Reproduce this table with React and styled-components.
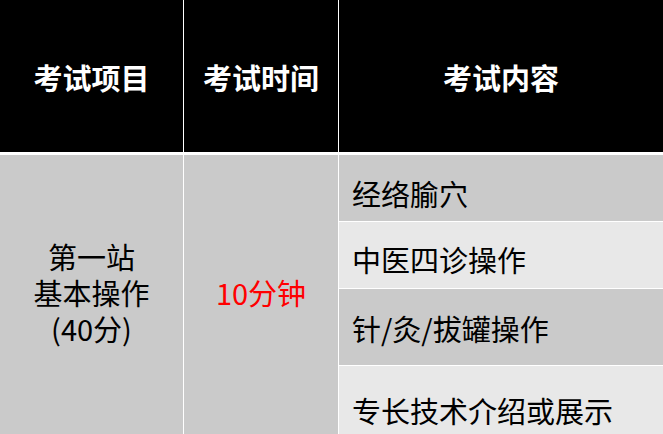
import React from "react";
import styled, { createGlobalStyle } from "styled-components";

const Global = createGlobalStyle`
  html, body { margin: 0; padding: 0; overflow: hidden; background: #ffffff; }
  body { font-family: "Noto Sans CJK SC", "Noto Sans", sans-serif; }
`;

const Table = styled.div`
  width: 663px;
  height: 434px;
  overflow: hidden;
  background: #ffffff;
  display: flex;
  flex-direction: column;
  gap: 3px;
`;

const Row = styled.div`
  display: grid;
  grid-template-columns: 183px 154px 1fr;
  column-gap: 1px;
  height: ${(p) => p.$h}px;
  flex: none;
`;

const HeadCell = styled.div`
  background: #000000;
  color: #ffffff;
  font-weight: 700;
  font-size: 29px;
  display: flex;
  align-items: center;
  justify-content: center;
  padding-top: 2px;
`;

const SpanCell = styled.div`
  background: #cacaca;
  color: ${(p) => p.$color || "#000000"};
  font-size: 29px;
  line-height: 36px;
  display: flex;
  align-items: center;
  justify-content: center;
  text-align: center;
  padding-bottom: 6px;
`;

const ItemList = styled.div`
  display: flex;
  flex-direction: column;
  gap: 1px;
`;

const Item = styled.div`
  height: ${(p) => p.$h}px;
  flex: none;
  box-sizing: border-box;
  background: ${(p) => (p.$light ? "#e8e8e8" : "#cacaca")};
  color: #000000;
  font-size: 29px;
  display: flex;
  align-items: center;
  padding: ${(p) => p.$pt}px 0 0 13px;
`;

const items = [
  { text: "经络腧穴", h: 66, pt: 9, light: false },
  { text: "中医四诊操作", h: 66, pt: 8, light: true },
  { text: "针/灸/拔罐操作", h: 76, pt: 2, light: false },
  { text: "专长技术介绍或展示", h: 68, pt: 19, light: true },
];

export default function App() {
  return (
    <>
      <Global />
      <Table>
        <Row $h={152}>
          <HeadCell>考试项目</HeadCell>
          <HeadCell>考试时间</HeadCell>
          <HeadCell>考试内容</HeadCell>
        </Row>
        <Row $h={279}>
          <SpanCell>
            第一站
            <br />
            基本操作
            <br />
            (40分)
          </SpanCell>
          <SpanCell $color="#ff0000">10分钟</SpanCell>
          <ItemList>
            {items.map((it) => (
              <Item key={it.text} $h={it.h} $pt={it.pt} $light={it.light}>
                {it.text}
              </Item>
            ))}
          </ItemList>
        </Row>
      </Table>
    </>
  );
}
